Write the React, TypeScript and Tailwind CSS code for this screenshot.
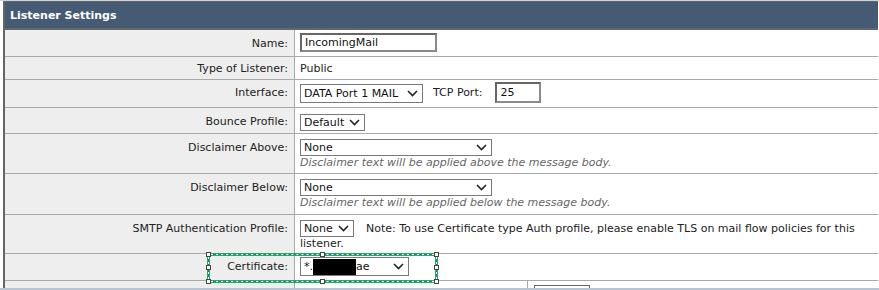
import React from 'react';

const font = { fontFamily: '"DejaVu Sans", Verdana, sans-serif' };

function Chevron() {
  return (
    <svg width="11" height="7" viewBox="0 0 11 7" className="shrink-0">
      <polyline points="1,1 5.5,5.5 10,1" fill="none" stroke="#222" strokeWidth="1.6" />
    </svg>
  );
}

function Select({ w, h = 18, children }: { w: number; h?: number; children: React.ReactNode }) {
  return (
    <span
      className="inline-flex items-center justify-between border border-[#7a7a7a] bg-white pl-[3px] pr-[4px] align-top text-[#111]"
      style={{ width: w, height: h }}
    >
      <span className="flex items-center">{children}</span>
      <Chevron />
    </span>
  );
}

function Row({
  label,
  h,
  pt = 6,
  children,
}: {
  label: string;
  h: number;
  pt?: number;
  children?: React.ReactNode;
}) {
  return (
    <div className="flex border-b border-[#a9a9a9]" style={{ height: h }}>
      <div className="w-[290px] shrink-0 border-r border-[#a9a9a9] bg-[#eeeeee] pr-[6px] text-right leading-[14px] text-[#222]" style={{ paddingTop: pt }}>
        {label}
      </div>
      <div className="flex-1 pl-[5px] leading-[14px] text-[#222]">{children}</div>
    </div>
  );
}

function Handle({ className }: { className: string }) {
  return <div className={`absolute h-[5px] w-[5px] border border-[#444] bg-white ${className}`} />;
}

export default function App() {
  return (
    <div className="relative h-[290px] w-[879px] overflow-hidden bg-white text-[11px]" style={font}>
      <div className="h-[1px] bg-[#c9d4e3]" />
      <div className="ml-[3px] w-[875px] border-l-2 border-[#666]">
        {/* header */}
        <div className="h-[29px] border-t border-b-2 border-[#666] bg-[#455a73] pl-[5px] pt-[7px] text-[11px] font-bold leading-[14px] text-white">
          Listener Settings
        </div>

        <Row label="Name:" h={27} pt={7}>
          <div className="pt-[3px]">
            <span className="inline-block h-[19px] w-[137px] border-2 border-[#8a8a8a] border-t-[#666] border-l-[#666] bg-white pl-[3px] leading-[15px] text-[#111]">
              IncomingMail
            </span>
          </div>
        </Row>

        <Row label="Type of Listener:" h={23} pt={5}>
          <div className="pt-[5px]">Public</div>
        </Row>

        <Row label="Interface:" h={28} pt={6}>
          <div className="flex items-center pt-[2px]">
            <span className="pt-[2px]">
              <Select w={123} h={19}>DATA Port 1 MAIL</Select>
            </span>
            <span className="ml-[10px]">TCP Port:</span>
            <span className="ml-[13px] inline-block h-[21px] w-[46px] border-2 border-[#8a8a8a] border-t-[#666] border-l-[#666] bg-white pl-[3px] pt-[2px] leading-[14px] text-[#111]">
              25
            </span>
          </div>
        </Row>

        <Row label="Bounce Profile:" h={26} pt={7}>
          <div className="pt-[6px]">
            <Select w={65} h={17}>Default</Select>
          </div>
        </Row>

        <Row label="Disclaimer Above:" h={40} pt={7}>
          <div className="pt-[5px]">
            <Select w={192} h={17}>None</Select>
            <div className="italic text-[#666]">Disclaimer text will be applied above the message body.</div>
          </div>
        </Row>

        <Row label="Disclaimer Below:" h={41} pt={7}>
          <div className="pt-[5px]">
            <Select w={192} h={17}>None</Select>
            <div className="italic text-[#666]">Disclaimer text will be applied below the message body.</div>
          </div>
        </Row>

        <Row label="SMTP Authentication Profile:" h={39} pt={7}>
          <div className="pt-[5px]">
            <div className="flex items-center">
              <Select w={54} h={17}>None</Select>
              <span className="ml-[12px]">
                Note: To use Certificate type Auth profile, please enable TLS on mail flow policies for this
              </span>
            </div>
            <div>listener.</div>
          </div>
        </Row>

        <Row label="Certificate:" h={27} pt={6}>
          <div className="pt-[3px]">
            <Select w={109} h={19}>
              <span>*.</span>
              <span className="inline-block h-[16px] w-[43px] bg-black" />
              <span>ae</span>
            </Select>
          </div>
        </Row>

        {/* partially visible row */}
        <div className="flex h-[8px] overflow-hidden">
          <div className="w-[290px] shrink-0 border-r border-[#a9a9a9] bg-[#eeeeee]" />
          <div className="flex flex-1">
            <div className="w-[233px] border-r border-[#a9a9a9]" />
            <div className="ml-[6px] mt-[4px] h-[12px] w-[56px] border border-[#666]" />
          </div>
        </div>
      </div>
      <div className="absolute bottom-0 left-0 h-[2px] w-full bg-[#b9c4d0]" />

      {/* selection overlay around certificate */}
      <div className="absolute left-[207px] top-[253px] h-[30px] w-[231px]">
        <div className="absolute inset-0 border-[3px] border-[#22b14c]" />
        <div className="absolute inset-[1px] border border-white" />
        <div className="absolute inset-[1px] border border-dashed border-[#1e73be]" />
        <Handle className="left-[-1px] top-[-1px]" />
        <Handle className="left-[-1px] top-[12px]" />
        <Handle className="left-[-1px] bottom-[-1px]" />
        <Handle className="left-[113px] top-[-1px]" />
        <Handle className="left-[113px] bottom-[-1px]" />
        <Handle className="right-[-1px] top-[-1px]" />
        <Handle className="right-[-1px] top-[12px]" />
        <Handle className="right-[-1px] bottom-[-1px]" />
      </div>
    </div>
  );
}
